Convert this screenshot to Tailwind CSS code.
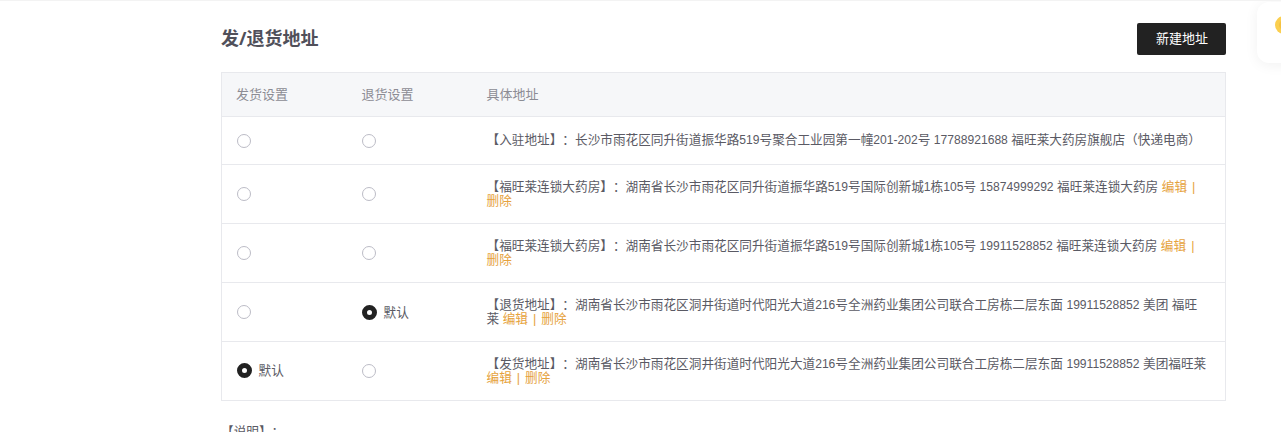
<!DOCTYPE html>
<html lang="en">

<head>
    <meta charset="UTF-8">
    <title>发/退货地址</title>
    <script src="https://cdn.jsdelivr.net/npm/@tailwindcss/browser@4"></script>
</head>

<body class="bg-white h-[432px] overflow-hidden relative border-t border-[#f3f3f3] font-['Liberation_Sans','Noto_Sans_CJK_SC',sans-serif] text-[12.65px] text-[#5a5a64] [text-spacing-trim:space-all]">

    <!-- floating toast, cut off by the window -->
    <div class="absolute left-[1257px] top-[1px] w-[60px] h-[61px] bg-white rounded-xl shadow-[0_2px_14px_rgba(0,0,0,0.06)]">
        <div class="absolute left-[18px] top-[14px] w-[18px] h-[18px] rounded-full bg-[#fbcf4f] flex items-center justify-center">
            <span class="w-[10px] h-[10px] rounded-full bg-[#f5c242]"></span>
        </div>
    </div>

    <div class="ml-[221px] w-[1005px]">
        <div class="flex items-center justify-between h-[71px] pt-[3px]">
            <h1 class="text-[18px] leading-[24px] font-bold text-[#50505a] font-['Noto_Sans','Noto_Sans_CJK_SC',sans-serif]">发/退货地址</h1>
            <button class="w-[89px] h-[32px] mt-[1px] pl-[1px] bg-[#222222] text-white text-[13px] rounded-[2px]">新建地址</button>
        </div>

        <table class="w-full table-fixed border-collapse border border-[#e8e9ed] leading-[14.5px]">
            <colgroup>
                <col class="w-[125px]">
                <col class="w-[125px]">
                <col>
            </colgroup>
            <thead>
                <tr class="h-[44px] bg-[#f6f7f9] text-[#8c8c94] text-left text-[13px]">
                    <th class="pl-[14px] pt-[2px] font-normal">发货设置</th>
                    <th class="pl-[15px] pt-[2px] font-normal">退货设置</th>
                    <th class="pl-[15px] pt-[2px] font-normal">具体地址</th>
                </tr>
            </thead>
            <tbody>
                <tr class="h-[48px] border-t border-[#e8e9ed]">
                    <td class="pl-[15px]"><span class="block w-[14px] h-[14px] rounded-full border border-[#bcbcc6]"></span></td>
                    <td class="pl-[15px]"><span class="block w-[14px] h-[14px] rounded-full border border-[#bcbcc6]"></span></td>
                    <td class="pl-[15px] pr-[17px]">【入驻地址】：长沙市雨花区同升街道振华路<span class="text-[12.1px]">519</span>号聚合工业园第一幢<span class="text-[12.1px]">201-202</span>号 <span class="text-[12.1px]">17788921688</span> 福旺莱大药房旗舰店（快递电商）</td>
                </tr>
                <tr class="h-[59px] border-t border-[#e8e9ed]">
                    <td class="pl-[15px]"><span class="block w-[14px] h-[14px] rounded-full border border-[#bcbcc6]"></span></td>
                    <td class="pl-[15px]"><span class="block w-[14px] h-[14px] rounded-full border border-[#bcbcc6]"></span></td>
                    <td class="pl-[15px] pr-[17px]">【福旺莱连锁大药房】：湖南省长沙市雨花区同升街道振华路<span class="text-[12.1px]">519</span>号国际创新城<span class="text-[12.1px]">1</span>栋<span class="text-[12.1px]">105</span>号 <span class="text-[12.1px]">15874999292</span> 福旺莱连锁大药房 <span class="text-[#e6a23c]">编辑 <span class="mx-[1.5px]">|</span> <span class="whitespace-nowrap">删除</span></span></td>
                </tr>
                <tr class="h-[59px] border-t border-[#e8e9ed]">
                    <td class="pl-[15px]"><span class="block w-[14px] h-[14px] rounded-full border border-[#bcbcc6]"></span></td>
                    <td class="pl-[15px]"><span class="block w-[14px] h-[14px] rounded-full border border-[#bcbcc6]"></span></td>
                    <td class="pl-[15px] pr-[17px]">【福旺莱连锁大药房】：湖南省长沙市雨花区同升街道振华路<span class="text-[12.1px]">519</span>号国际创新城<span class="text-[12.1px]">1</span>栋<span class="text-[12.1px]">105</span>号 <span class="text-[12.1px]">19911528852</span> 福旺莱连锁大药房 <span class="text-[#e6a23c]">编辑 <span class="mx-[1.5px]">|</span> <span class="whitespace-nowrap">删除</span></span></td>
                </tr>
                <tr class="h-[59px] border-t border-[#e8e9ed]">
                    <td class="pl-[15px]"><span class="block w-[14px] h-[14px] rounded-full border border-[#bcbcc6]"></span></td>
                    <td class="pl-[15px]">
                        <div class="flex items-center gap-[7px]">
                            <span class="w-[15px] h-[15px] rounded-full border-[5px] border-[#222222]"></span>
                            <span class="mt-[2px]">默认</span>
                        </div>
                    </td>
                    <td class="pl-[15px] pr-[17px]">【退货地址】：湖南省长沙市雨花区洞井街道时代阳光大道<span class="text-[12.1px]">216</span>号全洲药业集团公司联合工房栋二层东面 <span class="text-[12.1px]">19911528852</span> 美团 福旺莱 <span class="text-[#e6a23c]">编辑 <span class="mx-[1.5px]">|</span> <span class="whitespace-nowrap">删除</span></span></td>
                </tr>
                <tr class="h-[59px] border-t border-[#e8e9ed]">
                    <td class="pl-[15px]">
                        <div class="flex items-center gap-[6.5px] -mt-[1px]">
                            <span class="w-[15px] h-[15px] rounded-full border-[5px] border-[#222222]"></span>
                            <span class="mt-[2px]">默认</span>
                        </div>
                    </td>
                    <td class="pl-[15px]"><span class="block w-[14px] h-[14px] rounded-full border border-[#bcbcc6]"></span></td>
                    <td class="pl-[15px] pr-[17px]">【发货地址】：湖南省长沙市雨花区洞井街道时代阳光大道<span class="text-[12.1px]">216</span>号全洲药业集团公司联合工房栋二层东面 <span class="text-[12.1px]">19911528852</span> 美团福旺莱 <span class="text-[#e6a23c]">编辑 <span class="mx-[1.5px]">|</span> <span class="whitespace-nowrap">删除</span></span></td>
                </tr>
            </tbody>
        </table>

        <p class="mt-[24px] leading-[14px]">【说明】：</p>
    </div>

</body>

</html>
